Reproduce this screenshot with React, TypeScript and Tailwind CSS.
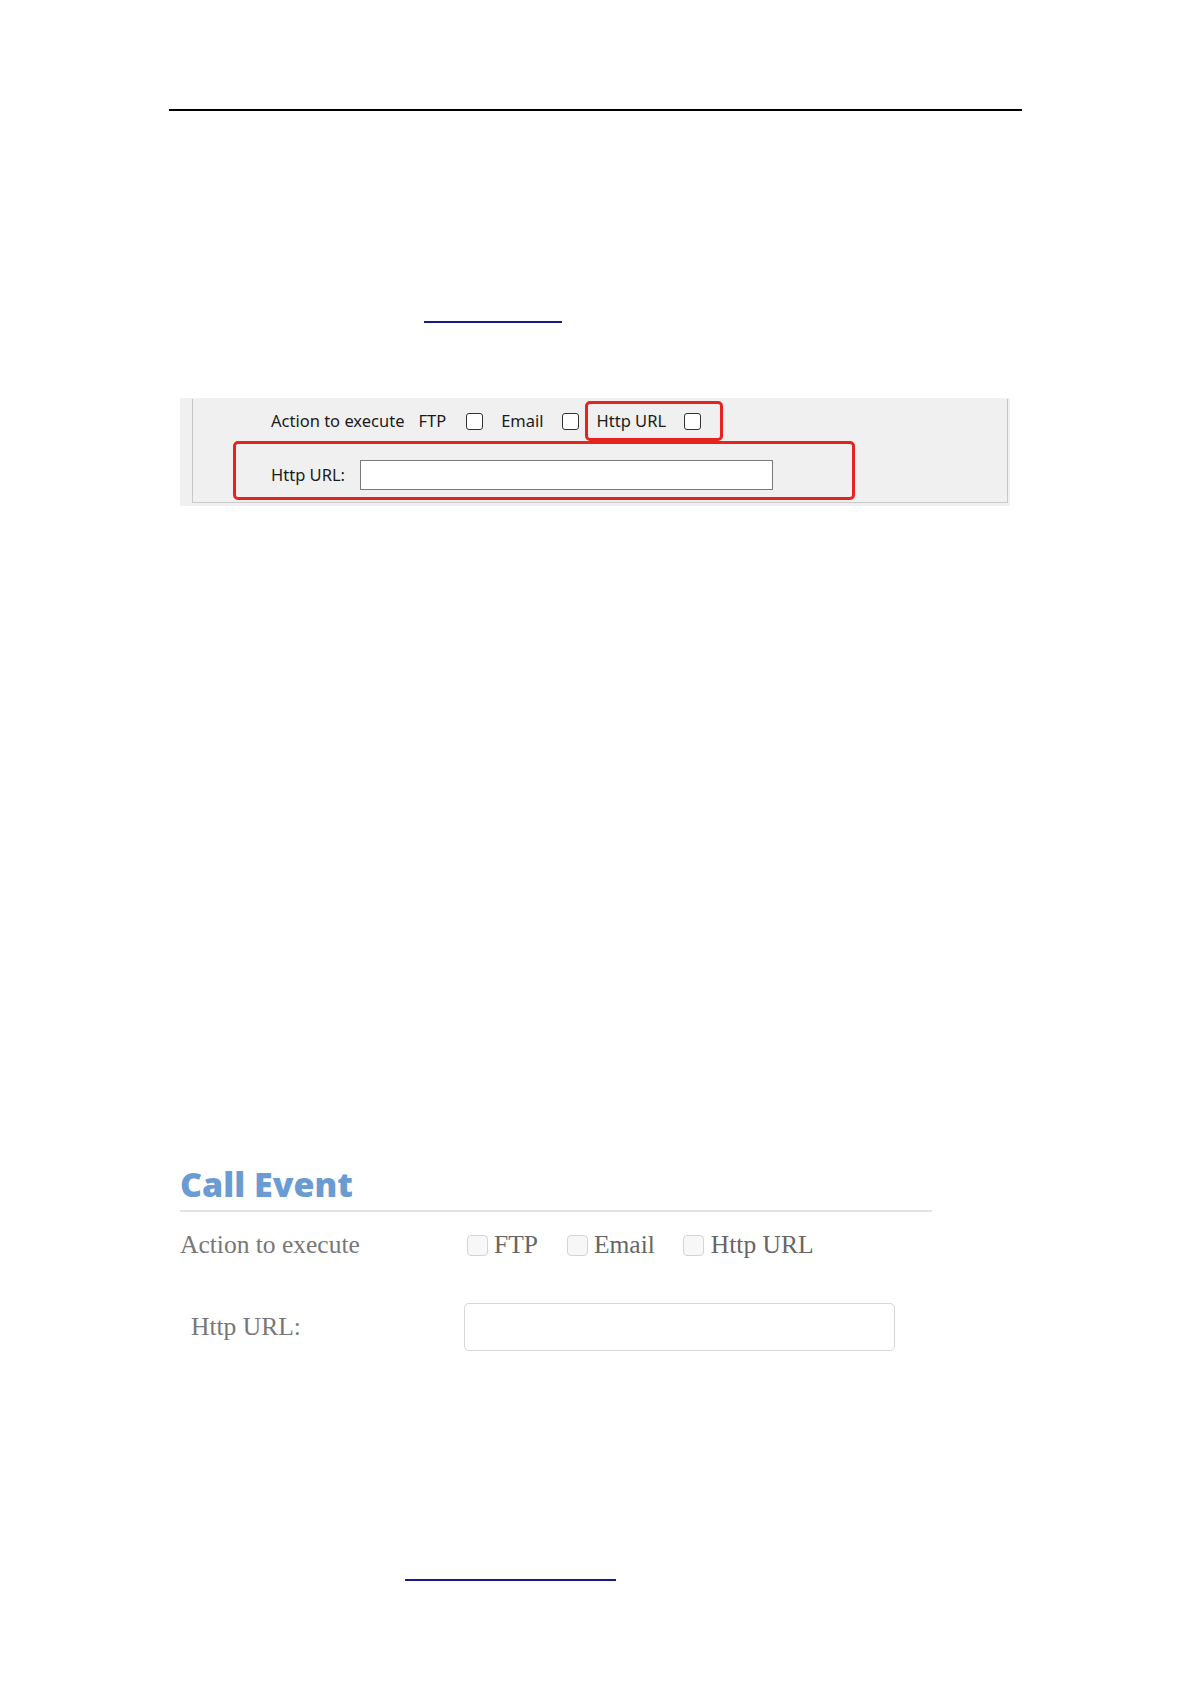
import React from "react";

function WinCheck({ className = "" }: { className?: string }) {
  return <span className={"block w-[17px] h-[17px] rounded-[3px] border border-[#333] bg-white " + className} />;
}

function WebCheck({ className = "" }: { className?: string }) {
  return <span className={"block w-[21px] h-[21px] rounded-[4px] border border-[#d4d4d4] bg-[#f7f7f7] " + className} />;
}

export default function App() {
  return (
    <div className="w-[1191px] h-[1684px] bg-white">
      <div className="mx-auto w-[853px] pt-[109px]">
        <div className="h-[2px] bg-black" />

        <div className="mt-[210px] ml-[255px] w-[138px] h-[2px] bg-[#1a1a8c]" />

        {/* Screenshot panel */}
        <div className="mt-[75px] ml-[11px] w-[830px] h-[108px] bg-[#f0f0f0] pl-[12px] pr-[2px] pt-[1px]">
          <div
            className="h-[104px] border-l border-b border-r border-[#c9c9c9] pt-[2px]"
            style={{ fontFamily: '"Noto Sans", "Open Sans", sans-serif' }}
          >
            <div className="flex items-center h-[40px] text-[16.5px] text-[#1b1b1b]">
              <span className="ml-[78px]">Action to execute</span>
              <span className="ml-[14px]">FTP</span>
              <WinCheck className="ml-[20px]" />
              <span className="ml-[18px]">Email</span>
              <WinCheck className="ml-[18px]" />
              <div className="ml-[6px] flex items-center h-[40px] w-[138px] border-[3px] border-[#e8231d] rounded-[5px] pl-[9px]">
                <span>Http URL</span>
                <WinCheck className="ml-[18px]" />
              </div>
            </div>
            <div className="ml-[40px] w-[622px] h-[59px] border-[3px] border-[#e8231d] rounded-[5px] flex items-start pt-[16px] text-[16.5px] text-[#1b1b1b]">
              <span className="ml-[35px] leading-[30px]">Http URL:</span>
              <span className="ml-[15px] block w-[413px] h-[30px] bg-white border border-[#7a7a7a]" />
            </div>
          </div>
        </div>

        {/* Call Event */}
        <div className="mt-[658px] ml-[11px] w-[752px]">
          <h2
            className="text-[34px] font-extrabold text-[#6a9bd3] leading-[40px]"
            style={{ fontFamily: '"Open Sans", "Noto Sans", sans-serif' }}
          >
            Call Event
          </h2>
          <div className="mt-[6px] h-[2px] bg-[#e3e3e3]" />
          <div style={{ fontFamily: '"Liberation Serif", "Times New Roman", serif' }} className="text-[#777]">
            <div className="flex items-center h-[50px] mt-[8px] text-[25.5px]">
              <span className="w-[287px]">Action to execute</span>
              <WebCheck />
              <span className="ml-[6px] text-[#666]">FTP</span>
              <WebCheck className="ml-[29px]" />
              <span className="ml-[6px] text-[#666]">Email</span>
              <WebCheck className="ml-[28px]" />
              <span className="ml-[7px] text-[#666]">Http URL</span>
            </div>
            <div className="flex items-center mt-[33px] text-[25.5px]">
              <span className="ml-[11px] w-[273px]">Http URL:</span>
              <span className="block w-[431px] h-[48px] rounded-[5px] border border-[#d6d6d6] bg-white" />
            </div>
          </div>
        </div>

        <div className="mt-[228px] ml-[236px] w-[211px] h-[2px] bg-[#1a1a8c]" />
      </div>
    </div>
  );
}
